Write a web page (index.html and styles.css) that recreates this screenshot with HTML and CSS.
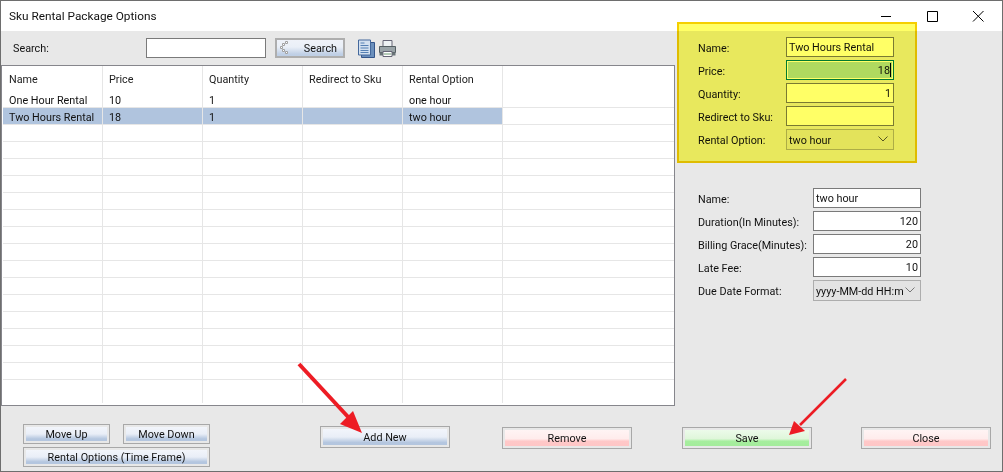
FILE: index.html
```html
<!DOCTYPE html>
<html lang="en">
<head>
<meta charset="utf-8">
<title>Sku Rental Package Options</title>
<link rel="stylesheet" href="styles.css">
</head>
<body>
<div class="window">
  <header class="titlebar">
    <span class="title">Sku Rental Package Options</span>
    <div class="controls">
      <svg class="ctl" width="46" height="30" viewBox="0 0 46 30"><path d="M18 15.5h10" stroke="#000" fill="none"/></svg>
      <svg class="ctl" width="46" height="30" viewBox="0 0 46 30"><path d="M18.5 10.5h10v10h-10z" stroke="#000" fill="none"/></svg>
      <svg class="ctl" width="46" height="30" viewBox="0 0 46 30"><path d="M18 10l10.500 10.500M28.500 10L18 20.500" stroke="#000" fill="none"/></svg>
    </div>
  </header>
  <div class="content">
    <section class="left">
      <div class="toolbar">
        <label class="search-label">Search:</label>
        <div class="field search-input"></div>
        <div class="btn search-btn"><svg class="spinner" width="10" height="13" viewBox="0 0 10 13"><path d="M6.500.500h2v2h-2zM3.500 2.500h2v2h-2zM1.500 5.500h2v2h-2zM3.500 8.500h2v2h-2zM6.500 10.500h2v2h-2z" fill="#fff" stroke="#a0a0a0"/></svg><span>Search</span></div>
        <svg class="tool-icon doc" width="19" height="19" viewBox="0 0 19 19">
          <path d="M4.500 3.500h13v15h-13z" fill="#6a8fbc" stroke="#34558a"/>
          <path d="M1.500 1h12v15h-12z" fill="#d2e0f0" stroke="#44689c"/>
          <path d="M3.500 4h4M3.500 6.500h8M3.500 9h8M3.500 11.500h8M3.500 13.500h8" stroke="#5580b4"/>
        </svg>
        <svg class="tool-icon" width="19" height="19" viewBox="0 0 19 19">
          <path d="M5 1.500h9v6H5z" fill="#eef2f4" stroke="#667"/>
          <path d="M1.500 7.500h16v6h-16z" fill="#9aa4a8" stroke="#555f63"/>
          <path d="M5 12.500h9v5H5z" fill="#fff" stroke="#667"/>
          <path d="M6 15h7" stroke="#6a9a70"/>
          <path d="M1.500 13.500h3.500v3h-3.500zM14 13.500h3.500v3H14z" fill="#6a7478"/>
        </svg>
      </div>
      <div class="grid">
        <div class="row head"><div class="cell">Name</div><div class="cell">Price</div><div class="cell">Quantity</div><div class="cell">Redirect to Sku</div><div class="cell">Rental Option</div></div>
        <div class="row first"><div class="cell">One Hour Rental</div><div class="cell">10</div><div class="cell">1</div><div class="cell"></div><div class="cell">one hour</div><div class="filler"></div></div>
        <div class="row selected"><div class="cell">Two Hours Rental</div><div class="cell">18</div><div class="cell">1</div><div class="cell"></div><div class="cell">two hour</div><div class="filler"></div></div>
        <div class="row"><div class="cell"></div><div class="cell"></div><div class="cell"></div><div class="cell"></div><div class="cell"></div><div class="filler"></div></div>
        <div class="row"><div class="cell"></div><div class="cell"></div><div class="cell"></div><div class="cell"></div><div class="cell"></div><div class="filler"></div></div>
        <div class="row"><div class="cell"></div><div class="cell"></div><div class="cell"></div><div class="cell"></div><div class="cell"></div><div class="filler"></div></div>
        <div class="row"><div class="cell"></div><div class="cell"></div><div class="cell"></div><div class="cell"></div><div class="cell"></div><div class="filler"></div></div>
        <div class="row"><div class="cell"></div><div class="cell"></div><div class="cell"></div><div class="cell"></div><div class="cell"></div><div class="filler"></div></div>
        <div class="row"><div class="cell"></div><div class="cell"></div><div class="cell"></div><div class="cell"></div><div class="cell"></div><div class="filler"></div></div>
        <div class="row"><div class="cell"></div><div class="cell"></div><div class="cell"></div><div class="cell"></div><div class="cell"></div><div class="filler"></div></div>
        <div class="row"><div class="cell"></div><div class="cell"></div><div class="cell"></div><div class="cell"></div><div class="cell"></div><div class="filler"></div></div>
        <div class="row"><div class="cell"></div><div class="cell"></div><div class="cell"></div><div class="cell"></div><div class="cell"></div><div class="filler"></div></div>
        <div class="row"><div class="cell"></div><div class="cell"></div><div class="cell"></div><div class="cell"></div><div class="cell"></div><div class="filler"></div></div>
        <div class="row"><div class="cell"></div><div class="cell"></div><div class="cell"></div><div class="cell"></div><div class="cell"></div><div class="filler"></div></div>
        <div class="row"><div class="cell"></div><div class="cell"></div><div class="cell"></div><div class="cell"></div><div class="cell"></div><div class="filler"></div></div>
        <div class="row"><div class="cell"></div><div class="cell"></div><div class="cell"></div><div class="cell"></div><div class="cell"></div><div class="filler"></div></div>
        <div class="row"><div class="cell"></div><div class="cell"></div><div class="cell"></div><div class="cell"></div><div class="cell"></div><div class="filler"></div></div>
        <div class="row"><div class="cell"></div><div class="cell"></div><div class="cell"></div><div class="cell"></div><div class="cell"></div><div class="filler"></div></div>
        <div class="row last"><div class="cell"></div><div class="cell"></div><div class="cell"></div><div class="cell"></div><div class="cell"></div></div>
      </div>
    </section>
    <aside class="right">
      <div class="form form-a">
        <div class="form-row"><span class="lbl">Name:</span><div class="field">Two Hours Rental</div></div>
        <div class="form-row"><span class="lbl">Price:</span><div class="field num focus">18<i class="caret"></i></div></div>
        <div class="form-row"><span class="lbl">Quantity:</span><div class="field num">1</div></div>
        <div class="form-row"><span class="lbl">Redirect to Sku:</span><div class="field"></div></div>
        <div class="form-row"><span class="lbl">Rental Option:</span><div class="field combo"><span class="combo-text">two hour</span><svg width="10" height="6" viewBox="0 0 10 6"><path d="M.5.500L5 5 9.500.500" fill="none" stroke="#555"/></svg></div></div>
      </div>
      <div class="form form-b">
        <div class="form-row"><span class="lbl">Name:</span><div class="field">two hour</div></div>
        <div class="form-row"><span class="lbl">Duration(In Minutes):</span><div class="field num">120</div></div>
        <div class="form-row"><span class="lbl">Billing Grace(Minutes):</span><div class="field num">20</div></div>
        <div class="form-row"><span class="lbl">Late Fee:</span><div class="field num">10</div></div>
        <div class="form-row"><span class="lbl">Due Date Format:</span><div class="field combo"><span class="combo-text">yyyy-MM-dd HH:m</span><svg width="10" height="6" viewBox="0 0 10 6"><path d="M.5.500L5 5 9.500.500" fill="none" stroke="#777"/></svg></div></div>
      </div>
    </aside>
  </div>
  <footer class="footer">
    <div class="move-group">
      <div class="btn blue">Move Up</div>
      <div class="btn blue">Move Down</div>
      <div class="btn blue wide">Rental Options (Time Frame)</div>
    </div>
    <div class="btn blue action add">Add New</div>
    <div class="btn red action remove">Remove</div>
    <div class="btn green action save">Save</div>
    <div class="btn red action close">Close</div>
  </footer>
  <div class="highlight"></div>
  <svg class="arrows" width="1003" height="472" viewBox="0 0 1003 472">
    <path d="M299 364L350 419" stroke="#ed1c24" stroke-width="4" fill="none"/>
    <path d="M362 433L340 424L353 411z" fill="#ed1c24"/>
    <path d="M846 379L800 425" stroke="#ed1c24" stroke-width="2.500" fill="none"/>
    <path d="M789 435L805 431L794 421z" fill="#ed1c24"/>
  </svg>
</div>
</body>
</html>
```
FILE: styles.css
```css
* { box-sizing: border-box; }
html, body { margin: 0; padding: 0; }
body { width: 1003px; height: 472px; overflow: hidden; background: #444; }

.window {
  position: relative;
  width: 1003px;
  height: 472px;
  display: flex;
  flex-direction: column;
  background: #e8e8e8;
  border: 1px solid #6e6e6e;
  font-family: Roboto, "Liberation Sans", sans-serif;
  font-size: 10.8px;
  color: #111;
}

.titlebar {
  height: 30px;
  flex: none;
  background: #fff;
  display: flex;
  align-items: center;
  justify-content: space-between;
  padding-left: 8px;
}
.title { font-size: 11.8px; color: #111; }
.controls { display: flex; margin-right: 1px; }
.ctl { display: block; }

.content { display: flex; flex: none; height: 375px; }
.left { width: 674px; flex: none; display: flex; flex-direction: column; }

.toolbar {
  height: 34px;
  flex: none;
  display: flex;
  align-items: center;
  padding-left: 12px;
}
.search-label { width: 133px; }
.search-input { width: 120px; height: 20px; background: #fff; border: 1px solid #7a7a7a; }
.tool-icon { margin-left: 2px; display: block; }
.tool-icon.doc { margin-left: 12px; }

.grid {
  flex: 1;
  background: #fff;
  border: 1px solid #86868c;
  padding-left: 1px;
  overflow: hidden;
}
.row { display: flex; height: 17px; border-bottom: 1px solid #e6e6e6; line-height: 20px; }
.row.head { height: 25px; border-bottom: 0; line-height: 28px; }
.row.last { border-bottom: 0; height: 23px; }
.cell { width: 100px; flex: none; padding-left: 6px; border-right: 1px solid #e6e6e6; white-space: nowrap; }
.row.head .cell { color: #222; }
.row.selected .cell { background: #b0c4de; }
.filler { flex: 1; }

.right { flex: 1; display: flex; flex-direction: column; padding-left: 23px; }
.form { display: flex; flex-direction: column; gap: 3px; }
.form-a { margin-top: 6px; }
.form-b { margin-top: 39px; }
.form-row { display: flex; align-items: center; height: 20px; }
.lbl { white-space: nowrap; flex: none; padding-top: 3px; }
.form-a .lbl { width: 88px; }
.form-b .lbl { width: 115px; }
.form-a .field { width: 108px; }
.form-b .field { width: 108px; }

.field {
  height: 20px;
  background: #fff;
  border: 1px solid #7a7a7a;
  padding: 0 2px;
  line-height: 20px;
  white-space: nowrap;
  overflow: hidden;
}
.field.num { text-align: right; }
.field.focus { background: #afd9ee; border-color: #007a78; box-shadow: inset 0 0 0 1px #fff; padding-right: 2px; }
.caret { display: inline-block; width: 1px; height: 14px; background: #000; vertical-align: -3px; }
.field.combo {
  height: 21px;
  display: flex;
  align-items: center;
  justify-content: space-between;
  background: #e3e3e3;
  border-color: #adadad;
  padding-right: 5px;
}
.combo-text { flex: none; padding-top: 3px; line-height: 16px; }

.footer { flex: 1; display: flex; align-items: flex-start; padding-left: 22px; }
.move-group { display: grid; grid-template-columns: 87px 87px; gap: 3px 13px; margin-top: 18px; }
.wide { grid-column: 1 / 3; }

.btn {
  height: 20px;
  display: flex;
  align-items: center;
  justify-content: center;
  border: 1px solid #a8a8a8;
  padding: 2px;
  background: linear-gradient(#f2f5fb 0%, #e9eef7 50%, #b4c6df 85%, #b4c6df 100%) content-box #e6e6e6;
  color: #111;
}
.search-btn {
  position: relative;
  width: 70px;
  height: 20px;
  margin-left: 9px;
  justify-content: flex-end;
  padding-right: 6px;
  background: linear-gradient(#f0f3f9 0%, #eaeff7 45%, #c0d0e6 80%, #bccde4 100%) content-box #e6e6e6;
  background-origin: border-box;
  background-clip: border-box;
  border-width: 2px;
  border-color: #aeaeae;
}
.spinner { position: absolute; left: 2px; top: 1px; }
.action { width: 130px; height: 22px; margin-top: 20px; }
.add { margin-left: 110px; }
.remove { margin-left: 52px; margin-top: 21px; }
.save { margin-left: 50px; margin-top: 21px; }
.close { margin-left: 49px; margin-top: 21px; }
.red { background: linear-gradient(#fff4f4 0%, #ffecec 55%, #ffc8c8 70%, #ffc6c6 100%) content-box #e6e6e6; }
.green { background: linear-gradient(#ecfbea 0%, #dff6da 55%, #a6ee9e 70%, #a4ec9c 100%) content-box #e6e6e6; }

.highlight {
  position: absolute;
  left: 676px;
  top: 21px;
  width: 240px;
  height: 141px;
  background: #ffff66;
  border: 2px solid #f5cf00;
  mix-blend-mode: multiply;
}
.arrows { position: absolute; left: -1px; top: -1px; pointer-events: none; }
```
